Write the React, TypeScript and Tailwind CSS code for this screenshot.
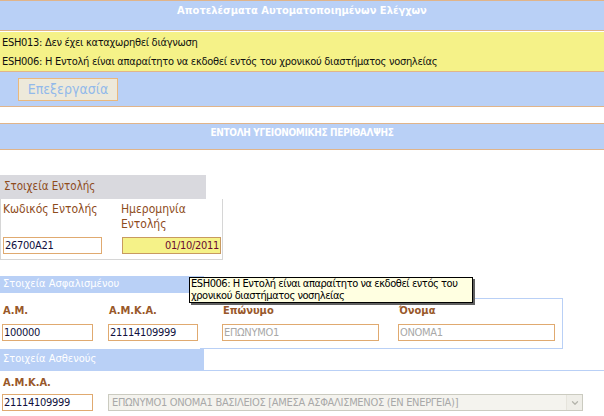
import { ChevronDown } from "lucide-react";

const font = "font-['DejaVu_Sans_Condensed','DejaVu_Sans',sans-serif]";

function TextBox({
  value,
  className = "",
  disabled = false,
}: {
  value: string;
  className?: string;
  disabled?: boolean;
}) {
  return (
    <div
      className={`flex h-[17px] items-center border border-[#e0aa70] bg-white px-[1px] text-[11px] leading-none tracking-[-0.3px] ${
        disabled ? "text-[#a8a8a8]" : "text-[#101040]"
      } ${className}`}
    >
      {value}
    </div>
  );
}

export default function App() {
  return (
    <div className={`h-[416px] w-[604px] overflow-hidden bg-white ${font}`}>
      {/* automated checks */}
      <div className="h-[31px] border-y border-[#e0b48a] bg-[#b9d0f6] pt-[2px] text-center text-[11px] font-bold text-white">
        Αποτελέσματα Αυτοματοποιημένων Ελέγχων
      </div>
      <div className="mt-px h-[40px] border-b border-[#e0b48a] bg-[#f5f288] pl-[2px] pt-px text-[11px] leading-[19px] tracking-[-0.3px] text-[#101010]">
        <p>ESH013: Δεν έχει καταχωρηθεί διάγνωση</p>
        <p>ESH006: Η Εντολή είναι απαραίτητο να εκδοθεί εντός του χρονικού διαστήματος νοσηλείας</p>
      </div>
      <div className="h-[35px] border-b border-[#e0b48a] bg-[#b9d0f6] pl-[18px] pt-[6px]">
        <button className="flex h-[23px] w-[100px] items-center justify-center border border-[#eab87c] bg-[#ede9da] text-[14px] text-[#92b9ea]">
          Επεξεργασία
        </button>
      </div>

      <div className="mt-[16px] h-[27px] border-y border-[#e0b48a] bg-[#b9d0f6] pt-[1px] text-center text-[10px] font-bold tracking-[-0.3px] text-white">
        ΕΝΤΟΛΗ ΥΓΕΙΟΝΟΜΙΚΗΣ ΠΕΡΙΘΑΛΨΗΣ
      </div>

      {/* order details */}
      <div className="mt-[25px] flex h-[24px] w-[206px] items-center bg-[#d9d9de] pl-[4px] text-[11.5px] text-[#8e4c1c]">
        Στοιχεία Εντολής
      </div>
      <div className="h-[61px] w-[223px] border-x border-b border-[#d6d6d6]">
        <div className="flex h-[38px] gap-[18px] pl-[2px] pt-[3px] text-[12px] leading-[15px] text-[#8e4c1c]">
          <div className="w-[100px]">Κωδικός Εντολής</div>
          <div>
            Ημερομηνία
            <br />
            Εντολής
          </div>
        </div>
        <div className="flex gap-[20px] pl-[2px]">
          <TextBox value="26700A21" className="w-[99px]" />
          <div className="flex h-[17px] w-[99px] items-center justify-end border border-[#c89a60] bg-[#f5f288] pr-[1px] text-[11px] leading-none tracking-[-0.3px] text-[#6a0a30]">
            01/10/2011
          </div>
        </div>
      </div>

      {/* insured person */}
      <div className="relative mt-[16px]">
        <div className="flex h-[17px] w-[204px] items-center bg-[#b9d0f6] pl-[3px] text-[11px] text-white">
          Στοιχεία Ασφαλισμένου
        </div>
        <div className="mt-[5px] flex h-[51px] w-[563px]">
          <div className="flex w-[200px] flex-col">
            <div className="flex pl-[3px] pt-[5px] text-[11px] font-bold leading-[15px] text-[#99582a]">
              <div className="w-[106px]">Α.Μ.</div>
              <div>Α.Μ.Κ.Α.</div>
            </div>
            <div className="mt-[6px] flex pl-[2px]">
              <TextBox value="100000" className="w-[91px]" />
              <TextBox value="21114109999" className="ml-[15px] w-[90px]" />
            </div>
          </div>
          <div className="flex flex-1 flex-col border-y border-r border-[#b9d0f6]">
            <div className="flex pl-[23px] pt-[4px] text-[11px] font-bold leading-[15px] text-[#99582a]">
              <div className="w-[176px]">Επώνυμο</div>
              <div>Όνομα</div>
            </div>
            <div className="mt-[6px] flex pl-[22px]">
              <TextBox value="ΕΠΩΝΥΜΟ1" disabled className="w-[157px]" />
              <TextBox value="ΟΝΟΜΑ1" disabled className="ml-[19px] w-[157px]" />
            </div>
          </div>
        </div>

        {/* tooltip */}
        <div className="absolute left-[189px] top-[1px] h-[26px] w-[284px] whitespace-nowrap border border-black bg-[#ffffe1] pl-[1px] text-[11px] leading-[12px] tracking-[-0.45px] text-black shadow-[2px_2px_0_#606060]">
          ESH006: Η Εντολή είναι απαραίτητο να εκδοθεί εντός του
          <br />
          χρονικού διαστήματος νοσηλείας
        </div>
      </div>

      {/* patient */}
      <div className="flex h-[22px] border-b border-[#b9d0f6]">
        <div className="flex w-[204px] items-center bg-[#b9d0f6] pl-[3px] text-[11px] text-white">
          Στοιχεία Ασθενούς
        </div>
      </div>
      <div className="pl-[3px] pt-[4px] text-[11px] font-bold leading-[15px] text-[#99582a]">
        Α.Μ.Κ.Α.
      </div>
      <div className="mt-[4px] flex pl-[2px]">
        <TextBox value="21114109999" className="w-[91px]" />
        <div className="ml-[15px] flex h-[17px] w-[475px] items-center border border-[#cbcbc0] bg-[#f4f3ee] pl-[3px] text-[11px] leading-none tracking-[-0.3px] text-[#a8a8a8]">
          <span className="flex-1 truncate">
            ΕΠΩΝΥΜΟ1 ΟΝΟΜΑ1 ΒΑΣΙΛΕΙΟΣ [ΑΜΕΣΑ ΑΣΦΑΛΙΣΜΕΝΟΣ (ΕΝ ΕΝΕΡΓΕΙΑ)]
          </span>
          <span className="flex h-[15px] w-[16px] items-center justify-center border-l border-[#e6e4dc] bg-[#efeee8]">
            <ChevronDown className="h-[10px] w-[10px] text-[#b4b4ac]" strokeWidth={3} />
          </span>
        </div>
      </div>
    </div>
  );
}
